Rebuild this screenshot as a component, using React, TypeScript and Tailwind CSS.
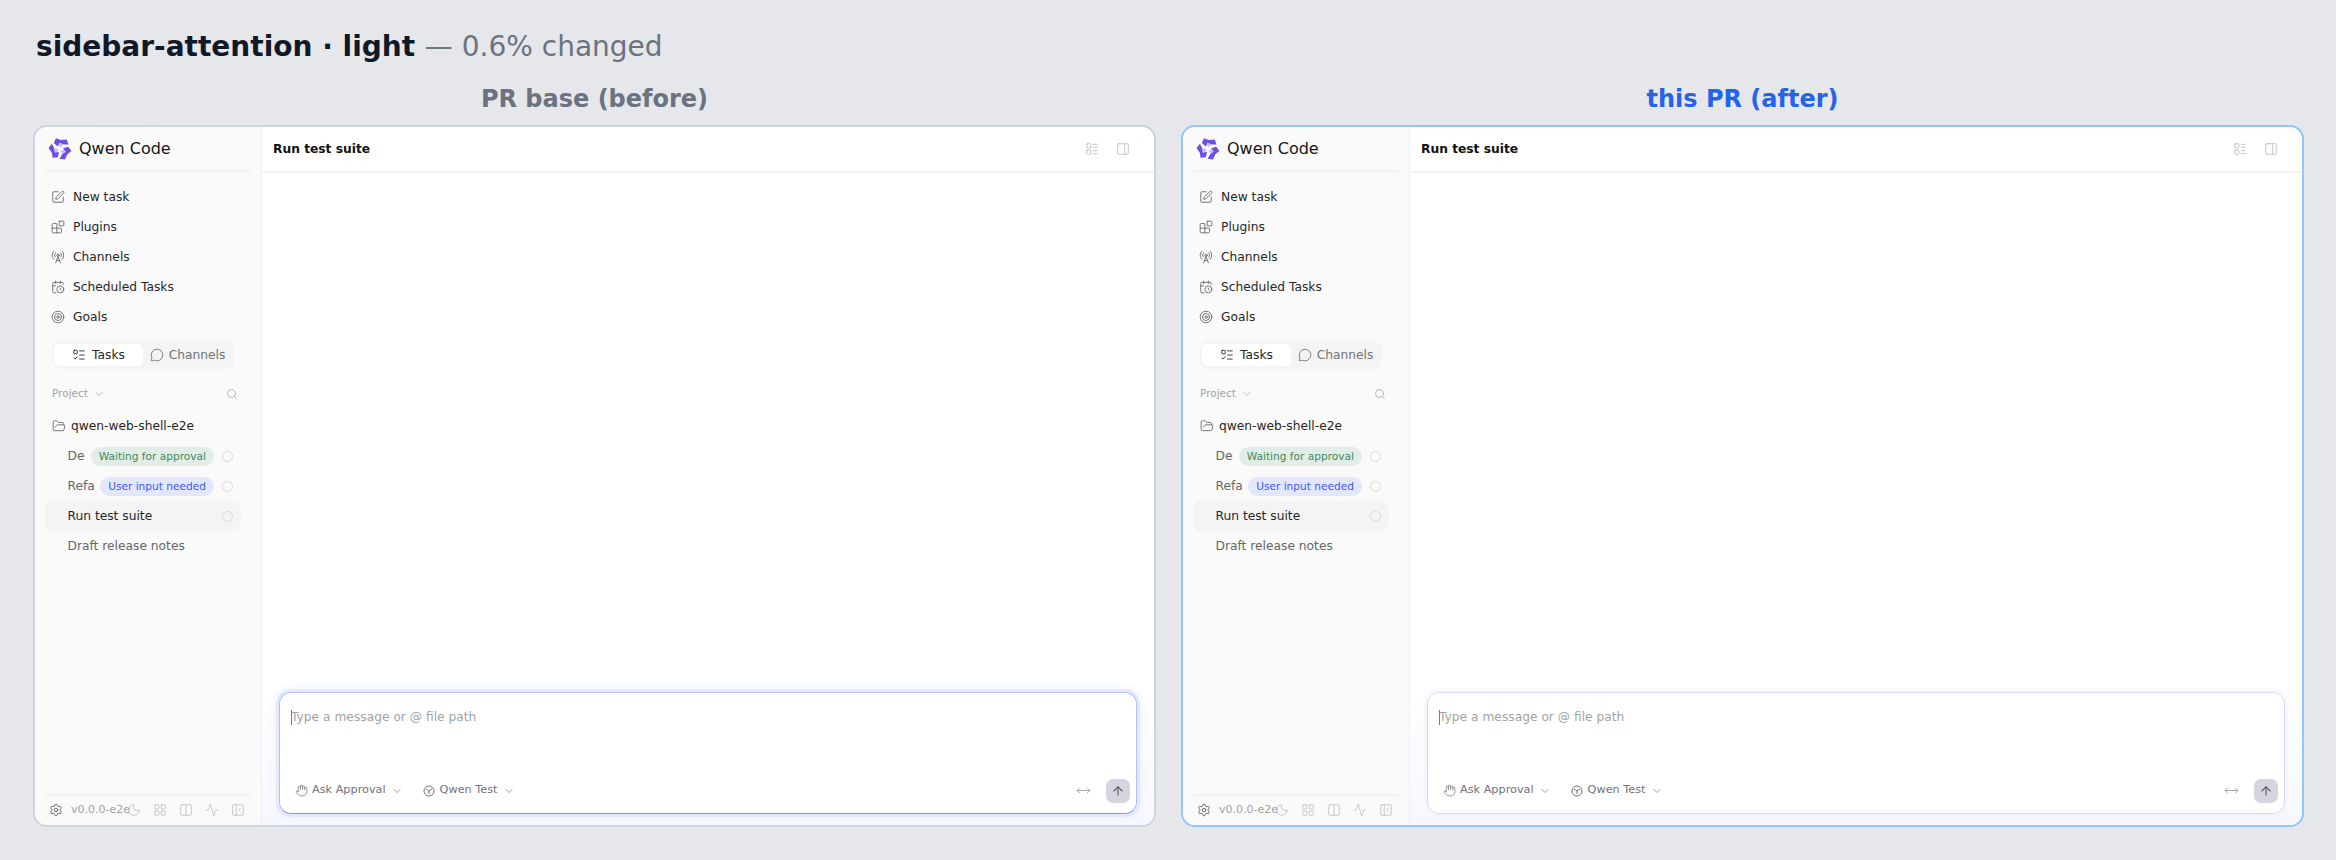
import React from "react";
import {
  Activity,
  ArrowUp,
  Blocks,
  CalendarClock,
  ChevronDown,
  Columns2,
  FolderOpen,
  Hand,
  LayoutGrid,
  LayoutList,
  ListTodo,
  MessageCircle,
  Moon,
  MoveHorizontal,
  PanelLeftClose,
  PanelRight,
  RadioTower,
  Search,
  Settings,
  SquarePen,
  Target,
} from "lucide-react";

const Logo = () => (
  <svg width="24" height="24" viewBox="0 0 24 24" className="shrink-0">
    {[0, 120, 240].map((r) => (
      <g key={r} transform={`rotate(${r} 12 12)`}>
        <path d="M8 1.2 L12.8 3 L18.6 2.6 L20.6 7.6 L15.2 7.4 L11.6 5.8 L9.8 9.6 L5.8 6 Z" fill="#6d4fe6" />
        <path d="M11.6 5.8 L15.2 7.4 L13 10.6 L10.6 8.4 Z" fill="#c9bdf8" />
      </g>
    ))}
  </svg>
);

// circle with a Y in it, next to the model name
const ModelIcon = () => (
  <svg width="12" height="12" viewBox="0 0 24 24" fill="none" stroke="currentColor" strokeWidth="2" className="shrink-0">
    <circle cx="12" cy="12" r="10" />
    <path d="M6 8l6 4 6-4M12 12v6" />
  </svg>
);

const NavRow = ({ icon: Icon, label }: { icon: React.ElementType; label: string }) => (
  <div className="flex h-[30px] items-center gap-[8px] px-[6px] text-[12.25px] text-[#262626]">
    <Icon size={14} strokeWidth={1.5} className="shrink-0 text-[#666666]" />
    <span>{label}</span>
  </div>
);

const Spinner = () => (
  <span className="ml-[8px] h-[11px] w-[11px] shrink-0 rounded-full border-[1.5px] border-[#dadada]" />
);

const TaskRow = ({
  title,
  badge,
  badgeClass,
  active,
  spinner,
}: {
  title: string;
  badge?: string;
  badgeClass?: string;
  active?: boolean;
  spinner?: boolean;
}) => (
  <div
    className={`flex h-[30px] items-center rounded-[8px] pl-[22.5px] pr-[8px] text-[12.25px] ${
      active ? "bg-[#f4f4f5] text-[#262626]" : "text-[#666666]"
    }`}
  >
    <span className="min-w-0 flex-1 overflow-hidden whitespace-nowrap">{title}</span>
    {badge && (
      <span className={`ml-[6px] shrink-0 rounded-full px-[8px] py-[2px] text-[10.6px] leading-[15px] ${badgeClass}`}>
        {badge}
      </span>
    )}
    {spinner && <Spinner />}
  </div>
);

const Sidebar = () => (
  <aside className="flex w-[227px] shrink-0 flex-col border-r border-[#f0f0f0] bg-[#fafafa] px-[10px]">
    <div className="flex h-[45px] shrink-0 items-center gap-[7px] border-b-2 border-[#f2f2f2] pl-[3px] text-[16px] text-[#171717]">
      <Logo />
      <span>Qwen Code</span>
    </div>
    <div className="flex flex-col pt-[10px]">
      <NavRow icon={SquarePen} label="New task" />
      <NavRow icon={Blocks} label="Plugins" />
      <NavRow icon={RadioTower} label="Channels" />
      <NavRow icon={CalendarClock} label="Scheduled Tasks" />
      <NavRow icon={Target} label="Goals" />
    </div>
    <div className="ml-[7px] mt-[9px] flex h-[28px] w-[182px] items-center rounded-[8px] bg-[#f4f4f5] px-[2px] text-[12.25px]">
      <div className="flex h-[22px] flex-1 items-center justify-center gap-[6px] rounded-[5px] bg-white text-[#262626]">
        <ListTodo size={14} strokeWidth={1.5} />
        Tasks
      </div>
      <div className="flex h-[22px] flex-1 items-center justify-center gap-[5px] text-[#737373]">
        <MessageCircle size={14} strokeWidth={1.5} />
        Channels
      </div>
    </div>
    <div className="mt-[16px] flex h-[18px] items-center justify-between pl-[7px] pr-[13px] text-[10.5px] text-[#a3a3a3]">
      <span className="flex items-center gap-[5px]">
        Project
        <ChevronDown size={12} strokeWidth={1.5} />
      </span>
      <Search size={12} strokeWidth={1.5} />
    </div>
    <div className="mt-[8px] flex h-[30px] items-center gap-[5px] pl-[7px] text-[12.25px] text-[#262626]">
      <FolderOpen size={14} strokeWidth={1.5} className="text-[#666666]" />
      qwen-web-shell-e2e
    </div>
    <div className="w-[196px]">
      <TaskRow title="Dep" badge="Waiting for approval" badgeClass="bg-[#e3ede8] text-[#3f8a5c]" spinner />
      <TaskRow title="Refa" badge="User input needed" badgeClass="bg-[#e2e7fe] text-[#3b5bf6]" spinner />
      <TaskRow title="Run test suite" active spinner />
      <TaskRow title="Draft release notes" />
    </div>
    <div className="mt-auto flex h-[31px] items-center border-t-2 border-[#f2f2f2] pl-[4px] pb-[1px] text-[#a3a3a3]">
      <Settings size={14} strokeWidth={1.5} className="shrink-0 text-[#595959]" />
      <span className="ml-[8px] w-[50px] whitespace-nowrap text-[11px]">v0.0.0-e2e</span>
      <div className="flex items-center text-[#bdbdbd]">
        <span className="flex w-[26px] justify-center"><Moon size={14} strokeWidth={1.4} /></span>
        <span className="flex w-[26px] justify-center"><LayoutGrid size={14} strokeWidth={1.4} /></span>
        <span className="flex w-[26px] justify-center"><Columns2 size={14} strokeWidth={1.4} /></span>
        <span className="flex w-[26px] justify-center"><Activity size={14} strokeWidth={1.4} /></span>
        <span className="flex w-[26px] justify-center"><PanelLeftClose size={14} strokeWidth={1.4} /></span>
      </div>
    </div>
  </aside>
);

const Composer = ({ focused }: { focused: boolean }) => (
  <div
    className={`flex h-[122px] flex-col rounded-[12px] bg-white pl-[11px] pr-[6px] ${
      focused
        ? "border-[1.5px] border-[#b4c0fb] border-b-[#8496f5] shadow-[0_0_0_3px_#e4e8fe,0_0_14px_#e6eafe]"
        : "border-[1.5px] border-[#dad8f6] shadow-[0_0_6px_#ecebfb]"
    }`}
  >
    <div className="flex h-[50px] items-center text-[12.25px] text-[#a3a3a3]">
      <span className="mr-[-1px] h-[15px] w-px bg-[#3b82f6]" />
      <span>Type a message or @ file path</span>
    </div>
    <div className="mt-auto flex h-[38px] items-center pb-[6px] text-[11.25px] text-[#71717f]">
      <div className="ml-[4px] flex items-center gap-[4px]">
        <Hand size={13} strokeWidth={1.4} />
        Ask Approval
        <ChevronDown size={12} strokeWidth={1.4} className="ml-[1px]" />
      </div>
      <div className="ml-[20px] flex items-center gap-[5px]">
        <ModelIcon />
        Qwen Test
        <ChevronDown size={12} strokeWidth={1.4} className="ml-[1px]" />
      </div>
      <MoveHorizontal size={15} strokeWidth={1.2} className="ml-auto mr-[15px] text-[#8a8a94]" />
      <div className="flex h-[24px] w-[24px] items-center justify-center rounded-[7px] bg-[#d4d5de] text-[#5b5b66]">
        <ArrowUp size={14} strokeWidth={2} />
      </div>
    </div>
  </div>
);

const Panel = ({ after }: { after?: boolean }) => (
  <div
    className={`flex h-[702px] overflow-hidden rounded-[14px] border-2 bg-white ${
      after ? "border-[#93c5fd]" : "border-[#cbd5e1]"
    }`}
  >
    <Sidebar />
    <main className="flex min-w-0 flex-1 flex-col">
      <div className="flex h-[46px] shrink-0 items-center justify-between border-b-2 border-[#f2f2f2] pl-[11px] pr-[24px] text-[12.25px] font-bold text-[#111111]">
        <span>Run test suite</span>
        <div className="flex items-center gap-[17px] text-[#b8b8b8]">
          <LayoutList size={14} strokeWidth={1.4} />
          <PanelRight size={14} strokeWidth={1.4} />
        </div>
      </div>
      <div className="flex flex-1 flex-col justify-end bg-gradient-to-t from-[#f7f8ff] to-white to-[22%] pb-[11.5px] pl-[17px] pr-[17px]">
        <Composer focused={!after} />
      </div>
    </main>
  </div>
);

export default function App() {
  return (
    <div className="h-[860px] w-[2336px] overflow-hidden bg-[#e5e7eb] pl-[33px] pr-[32px] pt-[27px] font-['DejaVu_Sans',sans-serif]">
      <h1 className="ml-[3px] h-[40px] text-[28px] font-bold leading-[40px] text-[#111827]">
        sidebar-attention · light <span className="font-normal text-[#6b7280]">— 0.6% changed</span>
      </h1>
      <div className="mt-[16px] grid grid-cols-2 gap-[25px]">
        <div>
          <h2 className="mb-[9px] h-[33px] text-center text-[24px] font-bold leading-[33px] text-[#6b7280]">PR base (before)</h2>
          <Panel />
        </div>
        <div>
          <h2 className="mb-[9px] h-[33px] text-center text-[24px] font-bold leading-[33px] text-[#2563eb]">this PR (after)</h2>
          <Panel after />
        </div>
      </div>
    </div>
  );
}
